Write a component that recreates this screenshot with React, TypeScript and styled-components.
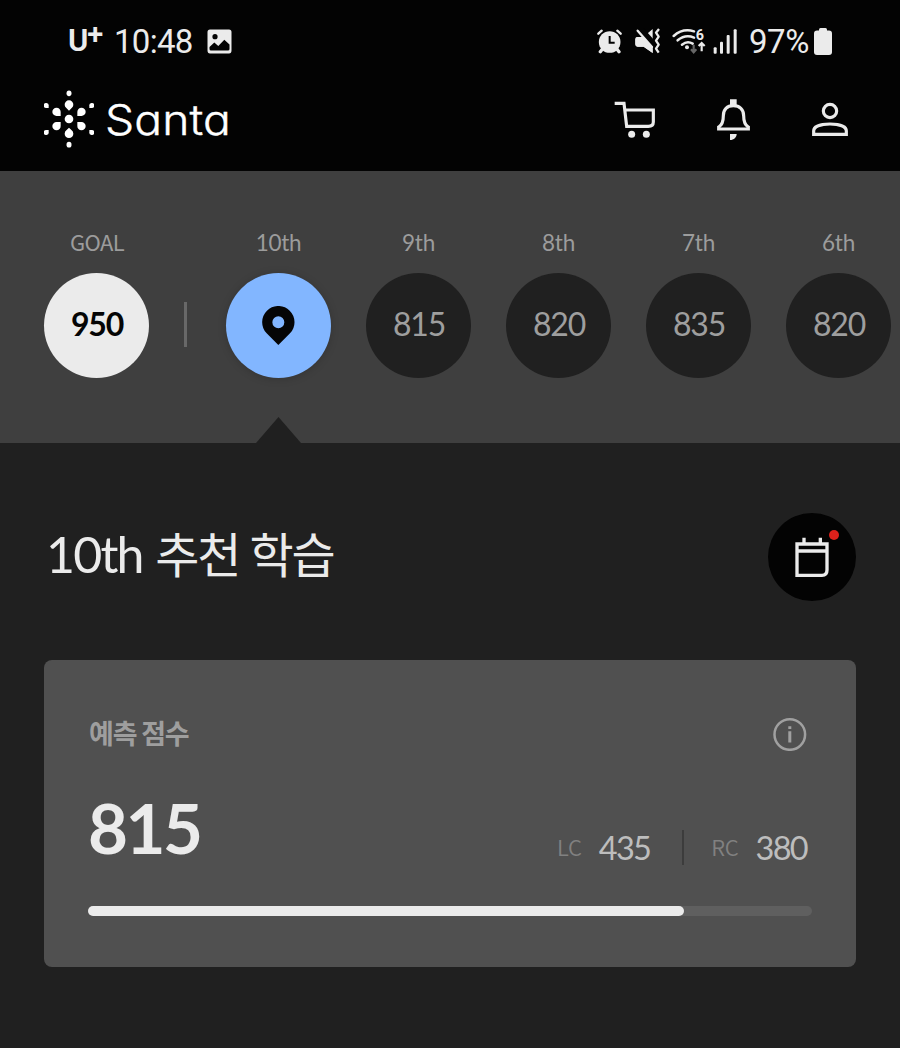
import React from 'react';
import styled, { createGlobalStyle } from 'styled-components';

const GlobalStyle = createGlobalStyle`
  *, *::before, *::after { box-sizing: border-box; }
  html, body { margin: 0; padding: 0; background: #202020; }
  svg { display: block; flex: none; }
`;

const Screen = styled.div`
  width: 900px;
  height: 1048px;
  overflow: hidden;
  background: #202020;
  color: #ebebeb;
  font-family: Lato, 'Noto Sans CJK KR', sans-serif;
  white-space: nowrap;
`;

const TopArea = styled.div`
  height: 171px;
  background: #030303;
`;

const StatusBar = styled.div`
  display: flex;
  justify-content: space-between;
  height: 82px;
  padding: 0 68px;
  font-family: Roboto, sans-serif;
`;

const StatusGroup = styled.div`
  display: flex;
  align-items: center;
`;

const StatusText = styled.span<{ $spacing: number }>`
  font-size: 33px;
  line-height: 80px;
  padding-top: 2px;
  letter-spacing: ${(p) => p.$spacing}px;
`;

const Carrier = styled.span`
  display: flex;
  width: 46px;
  font-weight: 600;
  font-size: 31px;
  line-height: 90px;
`;

const CarrierPlus = styled.span`
  font-size: 29px;
  line-height: 76px;
  margin-left: -1px;
`;

const Gap = styled.span<{ $w: number }>`
  flex: none;
  width: ${(p) => p.$w}px;
`;

const Header = styled.header`
  display: flex;
  justify-content: space-between;
  height: 89px;
  padding: 8px 52px 0 44px;
`;

const Brand = styled.div`
  display: flex;
  height: 58px;
  align-items: center;
  gap: 11px;
`;

const BrandName = styled.span`
  font-family: Inter, sans-serif;
  font-feature-settings: 'cv11' 1;
  font-size: 42px;
  font-weight: 300;
  letter-spacing: 0.1px;
  line-height: 58px;
  padding-top: 1px;
  color: #fff;
  -webkit-text-stroke: 0.4px #fff;
  transform: scaleX(1.1);
  transform-origin: 0 50%;
`;

const Actions = styled.nav`
  display: flex;
  align-items: center;
  height: 58px;
  gap: 62px;
`;

const Rounds = styled.section`
  position: relative;
  display: flex;
  height: 272px;
  padding: 56px 0 0 44px;
  overflow: hidden;
  background: #3f3f3f;
`;

const Round = styled.div`
  flex: none;
  width: 105px;
  margin-right: 35px;
`;

const RoundLabel = styled.div<{ $caps?: boolean }>`
  height: 45.5px;
  padding-left: ${(p) => (p.$caps ? 1 : 0)}px;
  text-align: center;
  font-family: ${(p) => (p.$caps ? "'Noto Sans CJK KR', sans-serif" : 'inherit')};
  font-size: ${(p) => (p.$caps ? 22 : 22.5)}px;
  line-height: ${(p) => (p.$caps ? 28 : 32)}px;
  letter-spacing: ${(p) => (p.$caps ? -0.6 : -0.3)}px;
  color: #9c9c9c;
`;

type Tone = 'goal' | 'current' | 'past';
const toneBackground = { goal: '#ebebeb', current: '#82b6ff', past: '#202020' };
const toneColor = { goal: '#050505', current: '#050505', past: '#9e9e9e' };

const RoundCircle = styled.div<{ $tone: Tone }>`
  display: flex;
  align-items: center;
  justify-content: center;
  width: 105px;
  height: 105px;
  border-radius: 50%;
  background: ${(p) => toneBackground[p.$tone]};
  color: ${(p) => toneColor[p.$tone]};
  font-size: 32px;
  font-weight: ${(p) => (p.$tone === 'goal' ? 700 : 400)};
  letter-spacing: -1.2px;
  box-shadow: ${(p) => (p.$tone === 'current' ? '0 1px 9px rgba(0, 0, 0, 0.18)' : 'none')};
`;

const RoundScore = styled.span`
  padding: 0 0 3px 1px;
`;

const RoundDivider = styled.div`
  flex: none;
  width: 3px;
  height: 45px;
  margin: 75px 39px 0 0;
  background: #686868;
`;

const Pointer = styled.div`
  position: absolute;
  left: 256px;
  bottom: 0;
  width: 45px;
  height: 26px;
  background: #202020;
  clip-path: polygon(50% 0, 100% 100%, 0 100%);
`;

const Lesson = styled.main`
  padding: 70px 44px 0;
`;

const LessonHead = styled.div`
  display: flex;
  justify-content: space-between;
  height: 147px;
`;

const Title = styled.h1`
  margin: 0;
  padding-left: 2px;
  font-size: 50px;
  font-weight: 400;
  line-height: 82px;
  letter-spacing: -1.8px;
`;

const TitleKorean = styled.span`
  margin-left: 1.5px;
  font-size: 48px;
  letter-spacing: -2.1px;
`;

const PlanButton = styled.button`
  position: relative;
  display: flex;
  align-items: center;
  justify-content: center;
  width: 88px;
  height: 88px;
  padding: 0;
  border: 0;
  border-radius: 50%;
  background: #030303;
`;

const AlertDot = styled.span`
  position: absolute;
  top: 17px;
  right: 17px;
  width: 10px;
  height: 10px;
  border-radius: 50%;
  background: #dd211b;
`;

const Card = styled.article`
  height: 307px;
  padding: 57px 44px 0;
  border-radius: 8px;
  background: #505050;
`;

const CardHead = styled.div`
  display: flex;
  justify-content: space-between;
  height: 66px;
  padding-right: 5px;
`;

const CardLabel = styled.h2`
  margin: 0;
  padding-left: 1px;
  font-family: 'Noto Sans CJK KR', sans-serif;
  font-size: 27px;
  font-weight: 700;
  line-height: 32px;
  letter-spacing: -1.2px;
  color: #9e9e9e;
`;

const ScoreRow = styled.div`
  display: flex;
  justify-content: space-between;
  height: 122.5px;
  padding-right: 5px;
`;

const Score = styled.strong`
  font-size: 69px;
  font-weight: 700;
  line-height: 89px;
  letter-spacing: -2.5px;
`;

const Parts = styled.div`
  display: flex;
  align-items: center;
  height: 36px;
  margin-top: 46px;
`;

const PartName = styled.span`
  margin-right: 17px;
  padding-bottom: 2px;
  font-family: 'Noto Sans CJK KR', sans-serif;
  font-size: 22px;
  font-weight: 350;
  line-height: 34px;
  letter-spacing: -0.2px;
  color: #818181;
`;

const PartScore = styled.span`
  font-size: 32.5px;
  letter-spacing: -1.7px;
  color: #bdbdbd;
`;

const PartDivider = styled.span`
  width: 2px;
  height: 35px;
  margin: 1px 27px 0 32px;
  background: #3c3c3c;
`;

const Track = styled.div`
  height: 10px;
  border-radius: 5px;
  background: #5f5f5f;
`;

const Fill = styled.div<{ $width: number }>`
  width: ${(p) => p.$width}px;
  height: 10px;
  border-radius: 5px;
  background: #ebebeb;
`;

const INK = '#ebebeb';

const PictureIcon = () => (
  <svg width="25" height="25" viewBox="0 0 25 25">
    <path fill={INK} fillRule="evenodd" d="M3 0.5H22Q24.5 .5 24.5 3V21.5Q24.5 24.5 22 24.5H3Q.5 24.5 .5 21.5V3Q.5 .5 3 .5ZM2.5 18V20Q2.5 21.5 4 21.5H21Q22.5 21.5 22.5 20V15.5L17.3 10.8 11.3 17 7.3 13.6Z" />
    <circle cx="8" cy="7.7" r="2.6" fill="#030303" />
  </svg>
);

const AlarmIcon = () => (
  <svg width="25" height="25" viewBox="0 0 75 75" fill="none" stroke={INK} strokeLinecap="round">
    <circle cx="38" cy="39" r="32.500" fill={INK} stroke="none" />
    <path strokeWidth="7" d="M4 14L14 5M61 5L71 14" />
    <path strokeWidth="10" d="M17 59L10 68M59 59L66 68" />
    <path stroke="#030303" strokeWidth="6" strokeLinecap="butt" d="M38 21V41H53" />
  </svg>
);

const MuteIcon = () => (
  <svg width="26" height="26" viewBox="0 0 78 78">
    <path fill={INK} d="M53 3V75L26 56H8Q1 56 1 49V34Q1 27 8 27H25Z" />
    <path stroke="#030303" strokeWidth="18" d="M14 1L58 50" />
    <path stroke={INK} strokeWidth="7" strokeLinecap="round" d="M8 8L51 57" />
    <path fill={INK} d="M1 34Q1 27 8 27H22L53 62V75L26 56H8Q1 56 1 49Z" />
    <path fill="none" stroke={INK} strokeWidth="7" strokeLinejoin="round" d="M72 3L63 14 71 26 63 38 71 50 63 62 71 74" />
  </svg>
);

const SixLabel = styled.text`
  font: 700 43px Roboto, sans-serif;
`;

const WifiIcon = () => (
  <svg width="34" height="28" viewBox="0 0 102 84" fill="none" stroke={INK} strokeWidth="7.500" strokeLinecap="round">
    <path d="M5 27Q32 3 66 13M17 40Q40 21 66 32M30 53Q46 40 62 50" />
    <circle cx="45" cy="61" r="6" fill={INK} stroke="none" />
    <SixLabel x="71" y="39" fill={INK} stroke="none">6</SixLabel>
    <path stroke="#666" strokeWidth="6.500" d="M65 53V76M57 67L65 76 73 67" strokeLinecap="butt" />
    <path strokeWidth="6.500" d="M89 73V49M80 57L89 48 98 57" strokeLinecap="butt" />
  </svg>
);

const SignalIcon = () => (
  <svg width="24" height="25" viewBox="0 0 72 75" fill={INK}>
    <rect x="2" y="55" width="9" height="19" rx="3" />
    <rect x="21" y="38" width="9" height="36" rx="3" />
    <rect x="41" y="18" width="9" height="56" rx="3" />
    <rect x="62" y="1" width="9" height="73" rx="3" />
  </svg>
);

const BatteryIcon = () => (
  <svg width="18" height="27" viewBox="0 0 18 27" fill={INK}>
    <rect x="5" width="8" height="6" rx="1.500" />
    <rect y="2.500" width="18" height="24.500" rx="3" />
  </svg>
);

const PETAL = 'M12 12H0A12.500 12.500 0 1 1 12 0Z';
const BUD = 'M7 6H0A7.500 7.500 0 1 1 7 0Z';
const DROP = 'M0 18L-8 10A13 13 0 1 1 8 10Z';

const SantaMark = () => (
  <svg width="50" height="58" viewBox="0 0 150 174" fill="#fff">
    <circle cx="75" cy="87" r="13" />
    <path d={DROP} transform="translate(75 44)" />
    <path d={DROP} transform="translate(75 131) scale(1 -1)" />
    <ellipse cx="75" cy="10" rx="7.500" ry="8.500" />
    <ellipse cx="75" cy="164" rx="7.500" ry="8.500" />
    {[1, -1].map((sx) =>
      [1, -1].map((sy) => (
        <g key={`${sx}${sy}`} transform={`translate(75 87) scale(${sx} ${sy})`}>
          <path d={PETAL} transform="translate(-37 -21)" />
          <path d={BUD} transform="translate(-68 -39)" />
        </g>
      )),
    )}
  </svg>
);

const CartIcon = () => (
  <svg width="42" height="39" viewBox="0 0 126 117" fill="none" stroke={INK} strokeWidth="9.500">
    <path d="M5 10H33L41 79H106Q121 79 121 66V30H36" />
    <circle cx="56" cy="103" r="10.500" fill={INK} stroke="none" />
    <circle cx="100" cy="103" r="10.500" fill={INK} stroke="none" />
  </svg>
);

const BellIcon = () => (
  <svg width="33" height="41" viewBox="0 0 99 123" fill="none" stroke={INK} strokeWidth="9.500">
    <path d="M5 90H94V84C82 77 80 66 80 50C80 31 68 20 49 20C30 20 19 31 19 50C19 66 17 77 5 84Z" />
    <path fill={INK} stroke="none" d="M39 1H59V18H39ZM39 105H59C59 115 51 123 39 123Z" />
  </svg>
);

const PersonIcon = () => (
  <svg width="36" height="35" viewBox="0 0 108 105" fill="none" stroke={INK} strokeWidth="9.500">
    <circle cx="54" cy="27" r="20" />
    <path d="M5 97V87C5 73 26 66 54 66S103 73 103 87V97Z" />
  </svg>
);

const PinIcon = () => (
  <svg width="33" height="39" viewBox="0 0 99 117">
    <path fill="#050505" fillRule="evenodd" d="M49 117L14 82A48.500 48.500 0 1 1 84 82ZM49 31A18 18 0 1 0 49 67A18 18 0 1 0 49 31Z" />
  </svg>
);

const CalendarIcon = () => (
  <svg width="34" height="41" viewBox="0 0 102 123" fill="none" stroke={INK} strokeWidth="10">
    <path d="M6 21H96V99Q96 115 81 115H6ZM6 42H96M27 2V21M76 2V21" />
  </svg>
);

const InfoIcon = () => (
  <svg width="34" height="34" viewBox="0 0 34 34" fill="none" stroke="#a0a0a0">
    <circle cx="16.800" cy="17.500" r="15.300" strokeWidth="2.500" />
    <path strokeWidth="3" d="M16.800 14.200V25.500M16.800 9.200V12" />
  </svg>
);

const pastRounds = [
  { label: '9th', score: 815 },
  { label: '8th', score: 820 },
  { label: '7th', score: 835 },
  { label: '6th', score: 820 },
];

export default function App() {
  return (
    <Screen>
      <GlobalStyle />
      <TopArea>
        <StatusBar>
          <StatusGroup>
            <Carrier>
              U<CarrierPlus>+</CarrierPlus>
            </Carrier>
            <StatusText $spacing={-0.7}>10:48</StatusText>
            <Gap $w={14} />
            <PictureIcon />
          </StatusGroup>
          <StatusGroup>
            <AlarmIcon />
            <Gap $w={13} />
            <MuteIcon />
            <Gap $w={11} />
            <WifiIcon />
            <Gap $w={7} />
            <SignalIcon />
            <Gap $w={12} />
            <StatusText $spacing={-0.4}>97%</StatusText>
            <Gap $w={5} />
            <BatteryIcon />
          </StatusGroup>
        </StatusBar>
        <Header>
          <Brand>
            <SantaMark />
            <BrandName>Santa</BrandName>
          </Brand>
          <Actions>
            <CartIcon />
            <BellIcon />
            <PersonIcon />
          </Actions>
        </Header>
      </TopArea>

      <Rounds>
        <Round>
          <RoundLabel $caps>GOAL</RoundLabel>
          <RoundCircle $tone="goal">
            <RoundScore>950</RoundScore>
          </RoundCircle>
        </Round>
        <RoundDivider />
        <Round>
          <RoundLabel>10th</RoundLabel>
          <RoundCircle $tone="current">
            <PinIcon />
          </RoundCircle>
        </Round>
        {pastRounds.map((round) => (
          <Round key={round.label}>
            <RoundLabel>{round.label}</RoundLabel>
            <RoundCircle $tone="past">
              <RoundScore>{round.score}</RoundScore>
            </RoundCircle>
          </Round>
        ))}
        <Pointer />
      </Rounds>

      <Lesson>
        <LessonHead>
          <Title>
            10th <TitleKorean>추천 학습</TitleKorean>
          </Title>
          <PlanButton aria-label="calendar">
            <CalendarIcon />
            <AlertDot />
          </PlanButton>
        </LessonHead>
        <Card>
          <CardHead>
            <CardLabel>예측 점수</CardLabel>
            <InfoIcon />
          </CardHead>
          <ScoreRow>
            <Score>815</Score>
            <Parts>
              <PartName>LC</PartName>
              <PartScore>435</PartScore>
              <PartDivider />
              <PartName>RC</PartName>
              <PartScore>380</PartScore>
            </Parts>
          </ScoreRow>
          <Track>
            <Fill $width={596} />
          </Track>
        </Card>
      </Lesson>
    </Screen>
  );
}
